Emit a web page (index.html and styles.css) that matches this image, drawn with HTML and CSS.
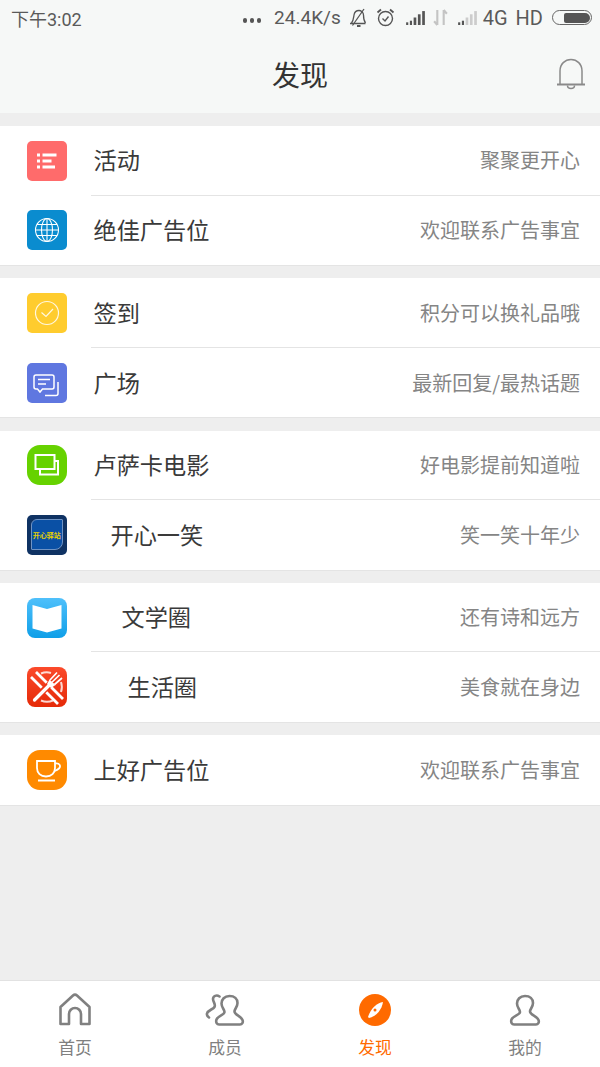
FILE: index.html
```html
<!DOCTYPE html>
<html lang="zh">
<head>
<meta charset="utf-8">
<title>发现</title>
<link rel="stylesheet" href="styles.css">
</head>
<body>
<div class="app">
  <header class="top">
    <div class="status">
      <span class="time">下午3:02</span>
      <span class="spacer"></span>
      <span class="dots"><i></i><i></i><i></i></span>
      <span class="speed">24.4K/s</span>
      <svg class="si mute" width="20" height="20" viewBox="0 0 20 20" fill="none" stroke="#555" stroke-width="1.300"><path d="M1 15.500h15.500M2.500 15c2-2 2-5 2.500-8s3-4.500 5-4.500 4.500 2 4.500 4.500c0 3 .5 6 2 8"/><path d="M3.500 17.500L15 1"/><path d="M8 18h3.500" stroke-width="2"/></svg>
      <svg class="si alarm" width="19" height="20" viewBox="0 0 19 20" fill="none" stroke="#555" stroke-width="1.400"><circle cx="9.500" cy="10.500" r="7"/><path d="M6.500 10.500l2.500 2.500 3.500-4.500"/><path d="M1.500 4.500L5 1.500M17.500 4.500L14 1.500" stroke-width="1.800"/></svg>
      <svg class="si sig1" width="21" height="15" viewBox="0 0 17.500 14"><g fill="#555"><rect x="0" y="11.500" width="2" height="2.500"/><rect x="3.500" y="10" width="2" height="4"/><rect x="7" y="7" width="2.500" height="7"/><rect x="11" y="4" width="2.500" height="10"/><rect x="15" y="1" width="2.500" height="13"/></g></svg>
      <svg class="si arrows" width="15" height="17" viewBox="0 0 13 16"><path d="M3.500 1v14M3.500 15L0.500 11.500M9.500 15V1M9.500 1l3 3.500" stroke="#c4c4c4" stroke-width="2" fill="none"/></svg>
      <svg class="si sig2" width="21" height="15" viewBox="0 0 17.500 14"><g fill="#555"><rect x="0" y="11.500" width="2" height="2.500"/><rect x="3.500" y="10" width="2" height="4"/></g><g fill="#ccc"><rect x="7" y="7" width="2.500" height="7"/><rect x="11" y="4" width="2.500" height="10"/><rect x="15" y="1" width="2.500" height="13"/></g></svg>
      <span class="net net-4g">4G</span>
      <span class="net net-hd">HD</span>
      <span class="battery"><span class="battery-fill"></span></span>
    </div>
    <div class="navbar">
      <h1 class="nav-title">发现</h1>
      <svg class="bell" width="30" height="32" viewBox="0 0 30 32" fill="none" stroke="#8a8a8a" stroke-width="1.500"><path d="M4 26V13C4 6 9 1.500 15 1.500S26 6 26 13v13"/><path d="M1 26.500h28" stroke-width="2"/><path d="M11.500 27.500c0 4 7 4 7 0"/></svg>
    </div>
  </header>

  <main class="list">
    <section class="group">
      <div class="row">
        <span class="ic ic-red"><svg width="40" height="40" viewBox="0 0 40 40" fill="#fff"><rect x="10" y="12.500" width="3" height="3"/><rect x="15.500" y="12.500" width="14" height="3"/><rect x="10" y="18.500" width="3" height="3"/><rect x="15.500" y="18.500" width="9" height="3"/><rect x="10" y="24.500" width="3" height="3"/><rect x="15.500" y="24.500" width="12.500" height="3"/></svg></span>
        <div class="body"><span class="name">活动</span><span class="desc">聚聚更开心</span></div>
      </div>
      <div class="row">
        <span class="ic ic-blue"><svg width="40" height="40" viewBox="0 0 40 40" fill="none" stroke="#fff" stroke-width="1.100"><circle cx="20" cy="20" r="11.500"/><ellipse cx="20" cy="20" rx="5.500" ry="11.500"/><path d="M20 8.500v23M8.500 20h23M10 14.500h20M10 25.500h20"/></svg></span>
        <div class="body"><span class="name">绝佳广告位</span><span class="desc">欢迎联系广告事宜</span></div>
      </div>
    </section>
    <section class="group">
      <div class="row">
        <span class="ic ic-yellow"><svg width="40" height="40" viewBox="0 0 40 40" fill="none" stroke="#fff" stroke-opacity=".85" stroke-width="1.200"><circle cx="20" cy="20" r="11.500"/><path d="M14.500 19.500l4.500 4 7-7.500"/></svg></span>
        <div class="body"><span class="name">签到</span><span class="desc">积分可以换礼品哦</span></div>
      </div>
      <div class="row">
        <span class="ic ic-indigo"><svg width="40" height="40" viewBox="0 0 40 40" fill="none" stroke="#fff" stroke-width="1.500"><path d="M9 12h16a2 2 0 0 1 2 2v10a2 2 0 0 1-2 2H15.500L13 29l-2.500-3H9a2 2 0 0 1-2-2V14a2 2 0 0 1 2-2z"/><path d="M11 16.500h12M11 21h8"/><path d="M31 19v11.500a2 2 0 0 1-2 2H18"/></svg></span>
        <div class="body"><span class="name">广场</span><span class="desc">最新回复/最热话题</span></div>
      </div>
    </section>
    <section class="group">
      <div class="row">
        <span class="ic ic-green"><svg width="40" height="40" viewBox="0 0 40 40" fill="none" stroke="#fff" stroke-width="2"><rect x="8.500" y="10" width="19" height="14"/><path d="M27.500 16H31v13.500H13V24"/></svg></span>
        <div class="body"><span class="name">卢萨卡电影</span><span class="desc">好电影提前知道啦</span></div>
      </div>
      <div class="row">
        <span class="ic ic-navy"><span class="navy-card"><span class="navy-text">开心驿站</span></span></span>
        <div class="body"><span class="name shift-a">开心一笑</span><span class="desc">笑一笑十年少</span></div>
      </div>
    </section>
    <section class="group">
      <div class="row">
        <span class="ic ic-sky"><svg width="40" height="40" viewBox="0 0 40 40" fill="#fff"><path d="M5.500 7l14.500 4 14.500-4v23.500L20 34.500 5.500 30.500z"/></svg></span>
        <div class="body"><span class="name shift-b">文学圈</span><span class="desc">还有诗和远方</span></div>
      </div>
      <div class="row">
        <span class="ic ic-fire"><svg width="40" height="40" viewBox="0 0 40 40" fill="none" stroke="#fff"><path d="M14 6.500a15 15 0 0 1 10-.5M34 15a15 15 0 0 1 0 10M26 33.500a15 15 0 0 1-12 0" stroke-width="2" stroke-opacity=".8"/><path d="M9 5l27 27M4 10l27 27" stroke-width="2.800"/><path d="M9 31L27 13" stroke="#ee3515" stroke-width="6.500"/><path d="M7.500 33L24 16.500" stroke-width="3.200" stroke-linecap="round"/><path d="M22.500 12.500L28.500 18 24 21 20 17z" fill="#fff" stroke="none"/><path d="M23 13l7-7.500M25.200 15l7.300-7M27.500 17.500l7.500-6.500" stroke-width="1.700"/></svg></span>
        <div class="body"><span class="name shift-c">生活圈</span><span class="desc">美食就在身边</span></div>
      </div>
    </section>
    <section class="group">
      <div class="row">
        <span class="ic ic-orange"><svg width="40" height="40" viewBox="0 0 40 40" fill="none" stroke="#fff" stroke-width="1.800"><path d="M10 11h18v7c0 5-3.500 8.500-9 8.500s-9-3.500-9-8.500z"/><path d="M28 13.500c5-1 6 3 4 5s-3 2-5 2.500"/><path d="M11 30.500h17"/></svg></span>
        <div class="body"><span class="name">上好广告位</span><span class="desc">欢迎联系广告事宜</span></div>
      </div>
    </section>
  </main>

  <nav class="tabs">
    <div class="tab">
      <svg width="34" height="34" viewBox="0 0 34 34" fill="none" stroke="#808080" stroke-width="2.600" stroke-linejoin="round"><path d="M2.500 14L15 2.500a3 3 0 0 1 4 0L31.500 14v17H23V21a6 6 0 0 0-12 0v10H2.500z"/></svg>
      <span class="tab-label">首页</span>
    </div>
    <div class="tab">
      <svg width="42" height="34" viewBox="0 0 42 34" fill="none" stroke="#808080" stroke-width="2.600" stroke-linecap="round" stroke-linejoin="round"><path d="M25.500 3c-5 0-8 3.500-8 7.500 0 4 3 6 3 8.500 0 3-6.500 3.500-8 7.500-1 3 .5 5 2.500 5h21c2 0 3.500-2 2.500-4.500-1.500-4-8-5-8-8.500 0-2.500 3-4.500 3-8.500S30.500 3 25.500 3z"/><path d="M15.500 3.500c-3-2-6.500-.5-6.500 2.500 0 3 3 5 1.500 8-1.500 2.500-6.500 3-7.500 6.500-.5 2 .5 3 2 4"/></svg>
      <span class="tab-label">成员</span>
    </div>
    <div class="tab tab-on">
      <svg width="32" height="34" viewBox="0 0 32 34"><ellipse cx="16" cy="17" rx="16" ry="16" fill="#ff6a00"/><path d="M24 9c-6 1-12 6-15 15l1 1c8-2 13-9 14-16z" fill="#fff"/><circle cx="16" cy="17" r="1.500" fill="#ff6a00"/></svg>
      <span class="tab-label">发现</span>
    </div>
    <div class="tab">
      <svg width="34" height="34" viewBox="0 0 34 34" fill="none" stroke="#808080" stroke-width="2.600" stroke-linecap="round" stroke-linejoin="round"><path d="M17 3c-5 0-8 3.500-8 7.500 0 4 3 6 3 8.500 0 3-7 3.500-8.500 7.500-1 3 .5 5 2.500 5h22c2 0 3.500-2 2.500-4.500-1.500-4-8.500-5-8.500-8.500 0-2.500 3-4.500 3-8.500S22 3 17 3z"/></svg>
      <span class="tab-label">我的</span>
    </div>
  </nav>
</div>
</body>
</html>
```

FILE: styles.css
```css
* { box-sizing: border-box; }
html, body { margin: 0; padding: 0; }
body { font-family: "Noto Sans CJK SC", "Liberation Sans", sans-serif; }

.app {
  width: 600px;
  height: 1067px;
  display: flex;
  flex-direction: column;
  background: #eeeeee;
  overflow: hidden;
}

.top { height: 113px; background: #f6f8f7; flex: none; }

.status {
  height: 35px;
  display: flex;
  align-items: center;
  padding: 0 8px 0 11px;
  color: #5a5a5a;
  font-family: "Roboto", "Noto Sans CJK SC", sans-serif;
}
.time { font-size: 18px; }
.spacer { flex: 1; }
.dots { display: flex; gap: 2.500px; margin-top: 6px; }
.dots i { width: 4.500px; height: 4.500px; border-radius: 50%; background: #555; }
.speed { font-size: 19px; margin-left: 13px; }
.si { flex: none; }
.mute { margin-left: 8px; }
.alarm { margin-left: 7px; }
.sig1 { margin-left: 10px; }
.arrows { margin-left: 7px; }
.sig2 { margin-left: 9px; }
.net { font-size: 20px; }
.net-4g { margin-left: 5px; }
.net-hd { margin-left: 8px; }
.battery {
  width: 40px;
  height: 15px;
  margin-left: 9px;
  border: 1.500px solid #666;
  border-radius: 8px;
  display: flex;
  align-items: center;
  justify-content: flex-end;
  padding: 1.500px;
}
.battery-fill { width: 26px; height: 100%; background: #555; border-radius: 2px 5px 5px 2px; }

.navbar {
  height: 78px;
  position: relative;
  display: flex;
  align-items: center;
  justify-content: center;
}
.nav-title {
  margin: 0;
  font-size: 28px;
  font-weight: 400;
  color: #333;
  line-height: 78px;
}
.bell { position: absolute; right: 14px; top: 23px; }

.list {
  margin-top: 13px;
  display: flex;
  flex-direction: column;
  gap: 12.330px;
  flex: none;
}

.group {
  background: #fff;
  border-bottom: 1.500px solid #e4e4e4;
}

.row {
  height: 69.500px;
  display: flex;
  align-items: center;
  padding-left: 26.700px;
}
.ic {
  width: 40px;
  height: 40px;
  border-radius: 5px;
  flex: none;
  display: flex;
  align-items: center;
  justify-content: center;
  overflow: hidden;
}
.ic-red { background: #ff6b6b; }
.ic-blue { background: #0a8ccf; }
.ic-yellow { background: #ffcc2e; }
.ic-indigo { background: #5f77e0; }
.ic-green { background: #66d200; border-radius: 13px; }
.ic-navy { background: #0f3263; }
.ic-sky { background: linear-gradient(#4fc0fb, #0f9fe8); border-radius: 8px; }
.ic-fire { background: linear-gradient(#fb4a2b, #e52a08); border-radius: 8px; }
.ic-orange { background: #ff8a00; border-radius: 13px; }

.navy-card {
  width: 32px;
  height: 31px;
  background: #0a50a5;
  border: 1px solid #6f93c4;
  border-radius: 6px 1px 8px 1px;
  display: flex;
  align-items: center;
  justify-content: center;
  overflow: hidden;
}
.navy-text {
  font-size: 7px;
  line-height: 8px;
  color: #e8d000;
  white-space: nowrap;
  font-weight: 700;
}

.body {
  flex: 1;
  height: 100%;
  margin-left: 24.300px;
  padding-right: 20px;
  display: flex;
  align-items: center;
  justify-content: space-between;
  padding-left: 2.500px;
}
.row:first-child .body { border-bottom: 1.500px solid #e4e4e4; }
.group:last-child .row:first-child .body { border-bottom: 0; }

.name { font-size: 23.200px; color: #3a3a3a; line-height: 28px; margin-bottom: 2px; }
.desc { font-size: 20px; color: #858585; line-height: 28px; }
.shift-a { margin-left: 17px; }
.shift-b { margin-left: 28px; }
.shift-c { margin-left: 34px; }

.tabs {
  margin-top: auto;
  height: 87px;
  flex: none;
  background: #fff;
  border-top: 1.500px solid #e2e2e2;
  display: grid;
  grid-template-columns: repeat(4, 150px);
}
.tab {
  display: flex;
  flex-direction: column;
  align-items: center;
  padding-top: 12px;
  color: #808080;
}
.tab-label { font-size: 16.800px; line-height: 24px; margin-top: 8px; }
.tab-on { color: #ff6a00; }
```
